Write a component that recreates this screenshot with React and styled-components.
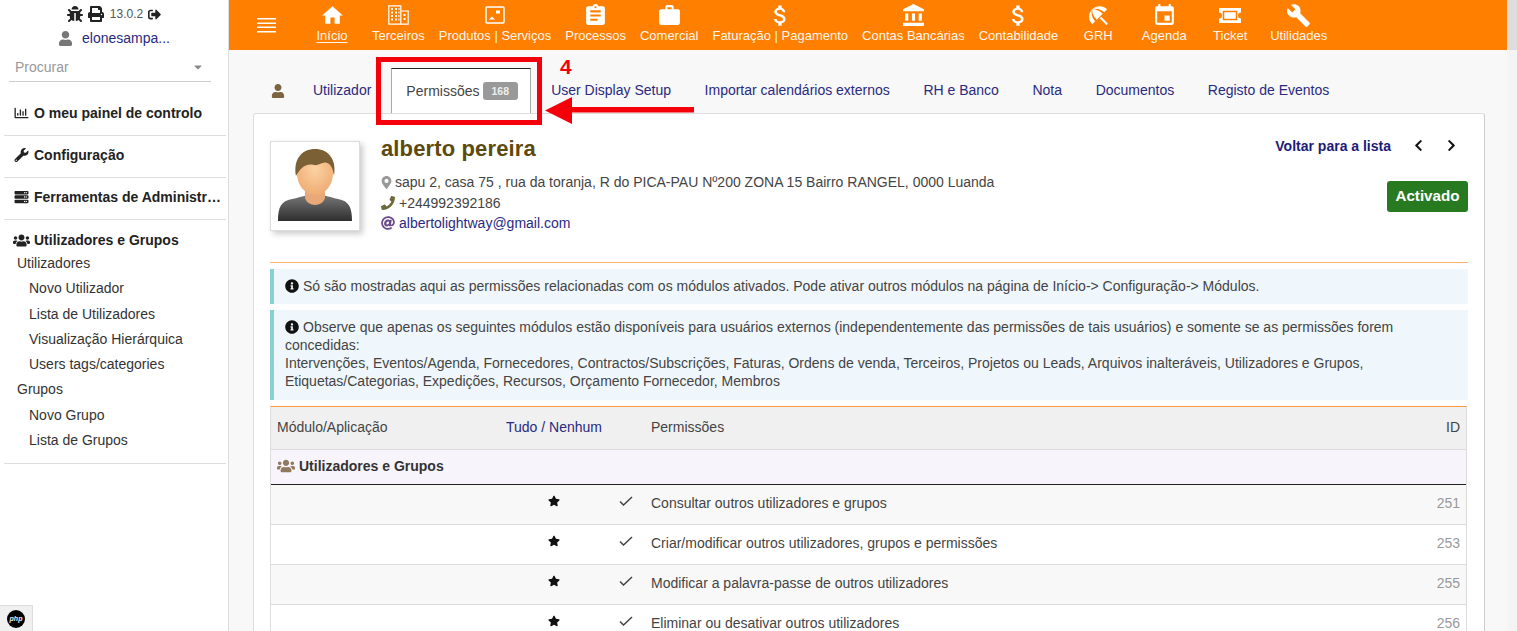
import React from 'react';
import styled, { createGlobalStyle } from 'styled-components';
import {
  FaBug, FaPrint, FaSignOutAlt, FaUser, FaWrench, FaServer, FaUsers, FaMapMarkerAlt,
  FaPhone, FaInfoCircle, FaStar, FaChevronLeft, FaChevronRight, FaRegChartBar, FaAt, FaCaretDown,
} from 'react-icons/fa';
import {
  MdHome, MdAssignment, MdWork, MdAttachMoney, MdAccountBalance, MdBeachAccess, MdEvent, MdBuild,
} from 'react-icons/md';

const GlobalStyle = createGlobalStyle`
  html, body { margin: 0; padding: 0; height: 100%; overflow: hidden; }
  body { font-family: "Liberation Sans", Arial, sans-serif; font-size: 14px; color: #444; background: #fff; }
`;

const Page = styled.div`
  display: flex;
  height: 631px;
  width: 1517px;
  overflow: hidden;
  position: relative;
`;

const Sidebar = styled.aside`
  width: 228px;
  flex: none;
  border-right: 1px solid #ddd;
  position: relative;
`;

const TopLine = styled.div`
  display: flex;
  align-items: center;
  justify-content: center;
  height: 14px;
  margin-top: 7px;
  gap: 5px;
  color: #222;
`;

const Version = styled.span`
  color: #555;
  font-size: 12px;
  margin-left: 1px;
`;

const UserLine = styled.div`
  display: flex;
  align-items: center;
  justify-content: center;
  gap: 9px;
  height: 18px;
  margin-top: 8px;
  color: #2a2a80;
  svg { color: #777; }
`;

const SearchBox = styled.div`
  display: flex;
  align-items: center;
  justify-content: space-between;
  margin: 5px 17px 0 9px;
  padding: 0 6px;
  height: 30px;
  box-sizing: border-box;
  border-bottom: 1px solid #ccc;
  color: #999;
  svg { color: #888; margin-right: 1px; }
`;

const MenuBlock = styled.div`
  margin: 0 2px 0 4px;
  padding: ${(p) => p.$pad};
  border-bottom: 1px solid #ddd;
`;

const MenuTitle = styled.div`
  display: flex;
  align-items: center;
  height: 22px;
  font-weight: 700;
  color: #222;
  white-space: nowrap;
  overflow: hidden;
  svg { width: 17px; margin: 0 4px 0 9px; flex: none; }
`;

const Ellipsis = styled.span`
  overflow: hidden;
  text-overflow: ellipsis;
  padding-right: 5px;
`;

const MenuGroup = styled.div`
  height: 25.3px;
  line-height: 25.3px;
  padding-left: 13px;
  color: #333;
`;

const MenuLink = styled(MenuGroup)`
  padding-left: 25px;
`;

const PhpBadge = styled.div`
  position: absolute;
  left: 0;
  bottom: 0;
  width: 33px;
  height: 26px;
  background: #f0f0f0;
  border: 1px solid #ddd;
  border-left: 0;
  border-bottom: 0;
  display: flex;
  align-items: center;
  justify-content: center;
  box-sizing: border-box;
`;

const PhpMark = styled.span`
  width: 18px;
  height: 18px;
  border-radius: 50%;
  background: #000;
  color: #eee;
  font-size: 7px;
  font-weight: 700;
  font-style: italic;
  line-height: 18px;
  text-align: center;
`;

const Main = styled.main`
  flex: 1;
  min-width: 0;
  background: #f8f8f8;
  display: flex;
  flex-direction: column;
`;

const TopBar = styled.header`
  height: 50px;
  flex: none;
  background: #ff8000;
  display: flex;
  color: #fff;
`;

const Burger = styled.div`
  width: 70px;
  flex: none;
  display: flex;
  align-items: center;
  svg { margin: -1px 0 0 28px; }
`;

const NavItem = styled.div`
  min-width: 66px;
  padding: 0 7px;
  box-sizing: border-box;
  display: flex;
  flex-direction: column;
  align-items: center;
  flex: none;
`;

const NavIcon = styled.div`
  height: 29px;
  display: flex;
  align-items: center;
  justify-content: center;
  padding-top: 1px;
  box-sizing: border-box;
`;

const NavLabel = styled.span`
  font-size: 13px;
  line-height: 14px;
  white-space: nowrap;
  color: #fff;
  text-decoration: ${(p) => (p.$active ? 'underline' : 'none')};
  text-underline-offset: 2px;
  opacity: .93;
`;

const Tabs = styled.nav`
  height: 63px;
  flex: none;
  display: flex;
  align-items: flex-end;
  padding-left: 42px;
  color: #2a2a80;
`;

const TabIcon = styled.div`
  width: 20px;
  height: 45px;
  display: flex;
  align-items: center;
  color: #7c6440;
  margin-right: 9px;
`;

const Tab = styled.div`
  height: 45px;
  display: flex;
  align-items: center;
  padding: 0 ${(p) => p.$pad || '16.8px'} 1px;
  box-sizing: border-box;
  white-space: nowrap;
`;

const ActiveTab = styled(Tab)`
  color: #444;
  background: #fff;
  border: 1px solid #aaa;
  border-top-color: #222;
  border-bottom: 0;
  padding: 0 0 1px 14px;
  width: 140px;
  margin: 0 3px 0 7px;
  position: relative;
  z-index: 1;
`;

const Count = styled.span`
  background: #999;
  color: #eee;
  font-size: 10.5px;
  font-weight: 700;
  border-radius: 3px;
  padding: 3px 9px;
  margin-left: 3px;
  line-height: 12px;
`;

const Card = styled.section`
  margin-left: 24px;
  width: 1232px;
  flex: 1;
  background: #fff;
  border: 1px solid #ddd;
  border-right-color: #ccc;
  border-bottom: 0;
  border-radius: 3px 3px 0 0;
  padding: 27px 16px 0;
  box-sizing: border-box;
`;

const Head = styled.div`
  display: flex;
  height: 121px;
  border-bottom: 1px solid #fbb46e;
`;

const Avatar = styled.div`
  width: 90px;
  height: 90px;
  flex: none;
  border: 1px solid #ddd;
  box-shadow: 3px 3px 6px #ccc;
  box-sizing: border-box;
  background: #fff;
  display: flex;
  align-items: center;
  justify-content: center;
`;

const Identity = styled.div`
  flex: 1;
  margin-left: 21px;
`;

const Name = styled.div`
  font-size: 22px;
  font-weight: 700;
  letter-spacing: .13px;
  line-height: 18px;
  margin-top: -1px;
  color: #5c4a10;
  margin-bottom: 14px;
`;

const Detail = styled.div`
  display: flex;
  align-items: center;
  height: 20.5px;
  gap: ${(p) => p.$gap || '4px'};
  color: ${(p) => p.$color || '#444'};
  svg { color: ${(p) => p.$icon || '#999'}; }
`;

const Side = styled.div`
  display: flex;
  flex-direction: column;
  align-items: flex-end;
`;

const BackRow = styled.div`
  display: flex;
  align-items: center;
  height: 11px;
  margin-top: -1px;
  color: #1c1c78;
  font-weight: 700;
  svg { color: #111; }
`;

const Pager = styled.span`
  display: inline-flex;
  gap: 20px;
  margin: 0 10px 0 21px;
`;

const Status = styled.div`
  margin-top: 30px;
  width: 81px;
  height: 31px;
  background: #277a20;
  border-radius: 3px;
  color: #fff;
  font-weight: 700;
  font-size: 15.2px;
  display: flex;
  align-items: center;
  justify-content: center;
  padding-bottom: 2px;
  box-sizing: border-box;
`;

const Info = styled.div`
  margin-top: 6px;
  background: #eff7fc;
  border-left: 4px solid #8ad0d0;
  padding: ${(p) => p.$pad || '8px 11px 9px'};
  line-height: 18px;
  color: #444;
  svg { color: #111; vertical-align: -2px; margin-right: 4px; }
`;

const PermTable = styled.div`
  margin: 6px 1px 0 0;
  border-top: 1px solid #ff9a3c;
  border-left: 1px solid #ddd;
  border-right: 1px solid #ddd;
`;

const TableRow = styled.div`
  display: grid;
  grid-template-columns: 220px 114px 30px 1fr 60px;
  align-items: center;
  box-sizing: border-box;
  height: ${(p) => p.$h || '40px'};
  padding: 0 6px ${(p) => p.$pb || '3px'} 6px;
  background: ${(p) => p.$bg || '#fff'};
  border-bottom: 1px solid ${(p) => p.$line || '#ddd'};
`;

const HeadLink = styled.span`
  color: #2a2a80;
  text-align: center;
  white-space: nowrap;
`;

const PermCell = styled.span`
  padding-left: 10px;
`;

const GroupRow = styled(TableRow)`
  display: flex;
  font-weight: 700;
  color: #333;
  gap: 4px;
  svg { color: #8f7a5f; }
`;

const Mark = styled.span`
  display: flex;
  justify-content: center;
  padding-bottom: 4px;
  color: #111;
`;

const IdCell = styled.span`
  text-align: right;
  color: ${(p) => p.$color || '#999'};
`;

const Scrollbar = styled.div`
  width: 10px;
  flex: none;
  background: #f4f4f4;
`;

const ScrollCorner = styled.div`
  height: 50px;
  background: #ddd;
`;

/* red annotation added on top of the screenshot */
const MarkBox = styled.div`
  position: absolute;
  left: 376px;
  top: 57px;
  width: 166px;
  height: 68px;
  border: 5px solid #f4000a;
  box-sizing: border-box;
  z-index: 3;
`;

const MarkNumber = styled.div`
  position: absolute;
  left: 560px;
  top: 55px;
  font-size: 21px;
  font-weight: 700;
  line-height: 24px;
  color: #f4000a;
  z-index: 3;
`;

const MarkArrow = styled.svg`
  position: absolute;
  left: 544px;
  top: 96px;
  z-index: 3;
`;

const BuildingIcon = () => (
  <svg width="21" height="20" viewBox="0 0 21 20" fill="none" stroke="#fff">
    <path d="M.8.800h12v18.400H.8zM12.800 6h7.400v13.200h-7.400z" strokeWidth="1.200" />
    <path d="M3 4h2M7 4h2M10.500 4h1M3 7.500h2M7 7.500h2M10.500 7.500h1M3 11h2M7 11h2M10.500 11h1M3 14.500h2M7 14.500h2M10.500 14.500h1M15.500 10h2M15.500 14h2" strokeWidth="2" />
  </svg>
);

const PhotoIcon = () => (
  <svg width="20" height="18" viewBox="0 0 20 18" fill="none">
    <rect x="1" y="1" width="18" height="16" rx="1" stroke="#fff" strokeWidth="1.500" />
    <path d="M4 13.500l3-3 3 3z" fill="#fff" />
    <rect x="11" y="4.500" width="4" height="3" fill="#fff" />
  </svg>
);

const TicketIcon = () => (
  <svg width="24" height="17" viewBox="0 0 24 17" fill="none">
    <path d="M1 1h22v4.500a3 3 0 0 0 0 6V16H1v-4.500a3 3 0 0 0 0-6z" fill="#fff" />
    <rect x="5.500" y="4.500" width="13" height="8" stroke="#ff8000" strokeWidth="1.500" />
  </svg>
);

const BurgerIcon = () => (
  <svg width="19" height="16" viewBox="0 0 19 16" fill="#fff">
    <rect y="1" width="19" height="1.500" />
    <rect y="5.500" width="19" height="1.500" />
    <rect y="9.500" width="19" height="1.500" />
    <rect y="14" width="19" height="1.500" />
  </svg>
);

const CheckIcon = () => (
  <svg width="14" height="10" viewBox="0 0 14 10" fill="none" stroke="#444" strokeWidth="1.500">
    <path d="M1 5.500l3.500 3.500L13 1" />
  </svg>
);

const AvatarPicture = () => (
  <svg width="78" height="78" viewBox="0 0 78 78">
    <defs>
      <linearGradient id="shirt" x1="0" y1="0" x2="0" y2="1">
        <stop offset="0" stopColor="#777" />
        <stop offset="1" stopColor="#2e2e2e" />
      </linearGradient>
      <radialGradient id="skin" cx=".5" cy=".4" r=".65">
        <stop offset="0" stopColor="#fcd2a4" />
        <stop offset="1" stopColor="#eeaa70" />
      </radialGradient>
    </defs>
    <path d="M2 74c0-14 3-20 14-22 8-1.500 12-4 23-4s16 2.500 23 4c11 2 14 8 14 22z" fill="url(#shirt)" />
    <path d="M29 38h20v12c0 5-6 8-10 8s-10-3-10-8z" fill="#e9a877" />
    <ellipse cx="39" cy="26" rx="18" ry="22" fill="url(#skin)" />
    <path d="M20 29C17 12 26 2 39 2s22 10 19 27c-1-7-3-12-7-13-4-2-8 3-13 2-5-1-8 0-11 2-4 3-6 7-7 9z" fill="#7b6036" />
  </svg>
);

const navItems = [
  { label: 'Início', icon: <MdHome size={25} />, active: true },
  { label: 'Terceiros', icon: <BuildingIcon /> },
  { label: 'Produtos | Serviços', icon: <PhotoIcon /> },
  { label: 'Processos', icon: <MdAssignment size={25} /> },
  { label: 'Comercial', icon: <MdWork size={25} /> },
  { label: 'Faturação | Pagamento', icon: <MdAttachMoney size={27} /> },
  { label: 'Contas Bancárias', icon: <MdAccountBalance size={25} /> },
  { label: 'Contabilidade', icon: <MdAttachMoney size={27} /> },
  { label: 'GRH', icon: <MdBeachAccess size={25} /> },
  { label: 'Agenda', icon: <MdEvent size={25} /> },
  { label: 'Ticket', icon: <TicketIcon /> },
  { label: 'Utilidades', icon: <MdBuild size={25} /> },
];

const tabs = ['User Display Setup', 'Importar calendários externos', 'RH e Banco', 'Nota', 'Documentos', 'Registo de Eventos'];

const rows = [
  { text: 'Consultar outros utilizadores e grupos', id: 251, bg: '#f8f8f8' },
  { text: 'Criar/modificar outros utilizadores, grupos e permissões', id: 253, bg: '#fff' },
  { text: 'Modificar a palavra-passe de outros utilizadores', id: 255, bg: '#f8f8f8' },
  { text: 'Eliminar ou desativar outros utilizadores', id: 256, bg: '#fff' },
];

export default function App() {
  return (
    <Page>
      <GlobalStyle />
      <Sidebar>
        <TopLine>
          <FaBug size={16} /><FaPrint size={16} /><Version>13.0.2</Version><FaSignOutAlt size={13} />
        </TopLine>
        <UserLine><FaUser size={15} /><span>elonesampa...</span></UserLine>
        <SearchBox>Procurar<FaCaretDown size={12} /></SearchBox>
        <MenuBlock $pad="20px 0 11px">
          <MenuTitle><FaRegChartBar size={14} />O meu painel de controlo</MenuTitle>
        </MenuBlock>
        <MenuBlock $pad="8px 0 11px">
          <MenuTitle><FaWrench size={14} />Configuração</MenuTitle>
        </MenuBlock>
        <MenuBlock $pad="8px 0 11px">
          <MenuTitle><FaServer size={14} /><Ellipsis>Ferramentas de Administração</Ellipsis></MenuTitle>
        </MenuBlock>
        <MenuBlock $pad="9px 0 10px">
          <MenuTitle><FaUsers size={17} />Utilizadores e Grupos</MenuTitle>
          <MenuGroup>Utilizadores</MenuGroup>
          <MenuLink>Novo Utilizador</MenuLink>
          <MenuLink>Lista de Utilizadores</MenuLink>
          <MenuLink>Visualização Hierárquica</MenuLink>
          <MenuLink>Users tags/categories</MenuLink>
          <MenuGroup>Grupos</MenuGroup>
          <MenuLink>Novo Grupo</MenuLink>
          <MenuLink>Lista de Grupos</MenuLink>
        </MenuBlock>
        <PhpBadge><PhpMark>php</PhpMark></PhpBadge>
      </Sidebar>

      <Main>
        <TopBar>
          <Burger><BurgerIcon /></Burger>
          {navItems.map((item) => (
            <NavItem key={item.label}>
              <NavIcon>{item.icon}</NavIcon>
              <NavLabel $active={item.active}>{item.label}</NavLabel>
            </NavItem>
          ))}
        </TopBar>

        <Tabs>
          <TabIcon><FaUser size={14} /></TabIcon>
          <Tab $pad="13px">Utilizador</Tab>
          <ActiveTab>Permissões<Count>168</Count></ActiveTab>
          {tabs.map((t) => <Tab key={t}>{t}</Tab>)}
        </Tabs>

        <Card>
          <Head>
            <Avatar><AvatarPicture /></Avatar>
            <Identity>
              <Name>alberto pereira</Name>
              <Detail $gap="2px">
                <FaMapMarkerAlt size={13} style={{ marginLeft: -1 }} />
                sapu 2, casa 75 , rua da toranja, R do PICA-PAU Nº200 ZONA 15 Bairro RANGEL, 0000 Luanda
              </Detail>
              <Detail $icon="#6c6a3a"><FaPhone size={14} />+244992392186</Detail>
              <Detail $color="#2a2a80" $icon="#6a4a8a"><FaAt size={14} />albertolightway@gmail.com</Detail>
            </Identity>
            <Side>
              <BackRow>
                Voltar para a lista
                <Pager><FaChevronLeft size={13} /><FaChevronRight size={13} /></Pager>
              </BackRow>
              <Status>Activado</Status>
            </Side>
          </Head>

          <Info>
            <FaInfoCircle size={14} />
            Só são mostradas aqui as permissões relacionadas com os módulos ativados. Pode ativar outros módulos na página de Início-&gt; Configuração-&gt; Módulos.
          </Info>
          <Info $pad="8px 40px 10px 11px">
            <FaInfoCircle size={14} />
            Observe que apenas os seguintes módulos estão disponíveis para usuários externos (independentemente das permissões de tais usuários) e somente se as permissões forem concedidas:<br />
            Intervenções, Eventos/Agenda, Fornecedores, Contractos/Subscrições, Faturas, Ordens de venda, Terceiros, Projetos ou Leads, Arquivos inalteráveis, Utilizadores e Grupos, Etiquetas/Categorias, Expedições, Recursos, Orçamento Fornecedor, Membros
          </Info>

          <PermTable>
            <TableRow $h="43px" $pb="2px" $bg="#f0f0f0">
              <span>Módulo/Aplicação</span>
              <HeadLink>Tudo / Nenhum</HeadLink>
              <span />
              <PermCell>Permissões</PermCell>
              <IdCell $color="#444">ID</IdCell>
            </TableRow>
            <GroupRow $h="35px" $pb="2px" $bg="#f8f4fb" $line="#222">
              <FaUsers size={18} />Utilizadores e Grupos
            </GroupRow>
            {rows.map((r) => (
              <TableRow key={r.id} $bg={r.bg}>
                <span />
                <Mark><FaStar size={12} /></Mark>
                <Mark><CheckIcon /></Mark>
                <PermCell>{r.text}</PermCell>
                <IdCell>{r.id}</IdCell>
              </TableRow>
            ))}
          </PermTable>
        </Card>
      </Main>

      <Scrollbar><ScrollCorner /></Scrollbar>

      <MarkBox />
      <MarkNumber>4</MarkNumber>
      <MarkArrow width="152" height="32" viewBox="0 0 152 32">
        <path d="M1 14.500L28 1v10h122v5.500H28V28z" fill="#f4000a" />
      </MarkArrow>
    </Page>
  );
}
